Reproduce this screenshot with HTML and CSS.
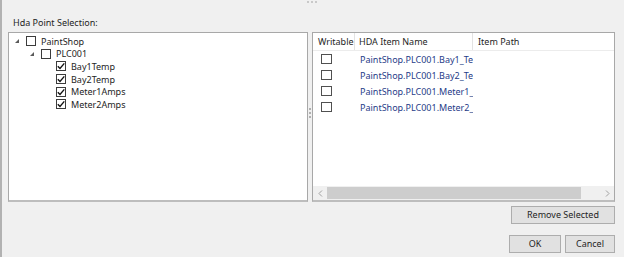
FILE: index.html
```html
<!DOCTYPE html>
<html>
<head>
<meta charset="utf-8">
<link rel="stylesheet" href="styles.css">
</head>
<body>
<div class="window">
  <div class="grip-top"><span></span><span></span><span></span></div>
  <div class="section-label">Hda Point Selection:</div>
  <div class="panes">
    <div class="tree-pane">
      <div class="tree-row lvl0">
        <svg class="expander" width="4" height="4" viewBox="0 0 4 4"><polygon points="4,0 4,4 0,4"/></svg>
        <span class="cb"></span><span class="tree-text">PaintShop</span>
      </div>
      <div class="tree-row lvl1">
        <svg class="expander" width="4" height="4" viewBox="0 0 4 4"><polygon points="4,0 4,4 0,4"/></svg>
        <span class="cb"></span><span class="tree-text">PLC001</span>
      </div>
      <div class="tree-row lvl2">
        <span class="cb checked"><svg viewBox="0 0 10 10" width="10" height="10"><path d="M1.8 5.2 L4 7.4 L8.3 2.4"/></svg></span><span class="tree-text">Bay1Temp</span>
      </div>
      <div class="tree-row lvl2">
        <span class="cb checked"><svg viewBox="0 0 10 10" width="10" height="10"><path d="M1.8 5.2 L4 7.4 L8.3 2.4"/></svg></span><span class="tree-text">Bay2Temp</span>
      </div>
      <div class="tree-row lvl2">
        <span class="cb checked"><svg viewBox="0 0 10 10" width="10" height="10"><path d="M1.8 5.2 L4 7.4 L8.3 2.4"/></svg></span><span class="tree-text">Meter1Amps</span>
      </div>
      <div class="tree-row lvl2">
        <span class="cb checked"><svg viewBox="0 0 10 10" width="10" height="10"><path d="M1.8 5.2 L4 7.4 L8.3 2.4"/></svg></span><span class="tree-text">Meter2Amps</span>
      </div>
    </div>
    <div class="splitter"><div class="splitter-grip"><span></span><span></span><span></span></div></div>
    <div class="list-pane">
      <div class="list-header">
        <div class="col col-w">Writable</div>
        <div class="col col-n">HDA Item Name</div>
        <div class="col col-p">Item Path</div>
      </div>
      <div class="list-body">
        <div class="list-row"><div class="col col-w"><span class="cb cb-lg"></span></div><div class="col col-n item">PaintShop.PLC001.Bay1_Temp</div><div class="col col-p"></div></div>
        <div class="list-row"><div class="col col-w"><span class="cb cb-lg"></span></div><div class="col col-n item">PaintShop.PLC001.Bay2_Temp</div><div class="col col-p"></div></div>
        <div class="list-row"><div class="col col-w"><span class="cb cb-lg"></span></div><div class="col col-n item">PaintShop.PLC001.Meter1_Amps</div><div class="col col-p"></div></div>
        <div class="list-row"><div class="col col-w"><span class="cb cb-lg"></span></div><div class="col col-n item">PaintShop.PLC001.Meter2_Amps</div><div class="col col-p"></div></div>
      </div>
      <div class="hscroll">
        <svg class="arrow" width="5" height="7" viewBox="0 0 5 7"><path d="M4 0.5 L1 3.5 L4 6.5"/></svg>
        <div class="track"><div class="thumb"></div></div>
        <svg class="arrow" width="5" height="7" viewBox="0 0 5 7"><path d="M1 0.5 L4 3.5 L1 6.5"/></svg>
      </div>
    </div>
  </div>
  <div class="actions">
    <button class="btn btn-remove">Remove Selected</button>
  </div>
  <div class="footer">
    <button class="btn btn-ok">OK</button>
    <button class="btn btn-cancel">Cancel</button>
  </div>
</div>
</body>
</html>
```
FILE: styles.css
```css
* { box-sizing: border-box; }
html, body { margin: 0; padding: 0; }
body {
  background: #f0f0f0;
  font-family: "Noto Sans", "Open Sans", sans-serif;
  font-size: 9px;
  color: #1e1e1e;
}
.window {
  width: 624px;
  height: 257px;
  border-left: 2px solid #b2b2b2;
  padding-left: 6px;
  padding-right: 9px;
  display: flex;
  flex-direction: column;
  overflow: hidden;
}
.grip-top {
  height: 16px;
  display: flex;
  gap: 2px;
  padding-left: 299px;
  padding-top: 1px;
}
.grip-top span {
  width: 2px;
  height: 2px;
  background: #bdbdbd;
  border-radius: 1px;
}
.section-label {
  height: 16px;
  line-height: 13px;
  padding-left: 5px;
}
.panes {
  display: flex;
  height: 170px;
}
.tree-pane {
  width: 300px;
  background: #fff;
  border: 1px solid #a8a8a8;
  border-bottom: 2px solid #bdbdbd;
  padding-top: 2px;
}
.tree-row {
  height: 12.6px;
  display: flex;
  align-items: center;
}
.tree-row.lvl0 { padding-left: 6px; }
.tree-row.lvl1 { padding-left: 21px; }
.tree-row.lvl2 { padding-left: 47px; }
.expander {
  fill: #5a5a5a;
  margin-right: 7px;
  flex: none;
}
.cb {
  width: 10px;
  height: 10px;
  border: 1px solid #3c3c3c;
  background: #fff;
  flex: none;
  display: inline-flex;
  align-items: center;
  justify-content: center;
  position: relative;
}
.cb svg {
  position: absolute;
  left: -1px;
  top: -1px;
}
.cb svg path {
  fill: none;
  stroke: #111;
  stroke-width: 1.4;
}
.tree-text {
  margin-left: 5px;
  white-space: nowrap;
}
.splitter {
  width: 4px;
  display: flex;
  align-items: center;
  justify-content: center;
}
.splitter-grip {
  display: flex;
  flex-direction: column;
  gap: 2px;
  margin-top: -8px;
}
.splitter-grip span {
  width: 2px;
  height: 2px;
  background: #b0b0b0;
}
.list-pane {
  flex: 1;
  background: #fff;
  border: 1px solid #a8a8a8;
  border-bottom: 2px solid #bdbdbd;
  display: flex;
  flex-direction: column;
}
.list-header {
  display: flex;
  height: 18px;
  border-bottom: 1px solid #ececec;
  align-items: stretch;
}
.list-header .col {
  line-height: 18px;
  border-right: 1px solid #e3e3e3;
}
.list-header .col-p { border-right: none; }
.col {
  white-space: nowrap;
  overflow: hidden;
  flex: none;
}
.col-w { width: 42px; padding-left: 5px; }
.col-n { width: 118px; padding-left: 4px; padding-right: 3px; }
.col-p { flex: 1; padding-left: 5px; }
.list-body { flex: 1; }
.list-row {
  display: flex;
  height: 16px;
  align-items: center;
}
.list-row .col-w { padding-left: 8px; display: flex; align-items: center; }
.list-row .col-n { padding-left: 5px; }
.cb-lg { width: 11px; height: 10px; border-color: #505050; }
.item { color: #1f3c88; }
.hscroll {
  height: 14px;
  background: #f0f0f0;
  display: flex;
  align-items: center;
  padding: 0 4px 0 5px;
}
.arrow path {
  fill: none;
  stroke: #a0a0a0;
  stroke-width: 1;
}
.track {
  flex: 1;
  height: 12px;
  margin: 0 24px 0 4px;
}
.thumb {
  height: 12px;
  background: #cdcdcd;
}
.actions {
  display: flex;
  justify-content: flex-end;
  margin-top: 4px;
}
.footer {
  display: flex;
  justify-content: flex-end;
  gap: 4px;
  margin-top: 11px;
}
.btn {
  font: inherit;
  color: #1e1e1e;
  background: #e1e1e1;
  border: 1px solid #adadad;
  height: 18px;
  padding: 0;
  margin: 0;
  line-height: 16px;
  text-align: center;
}
.btn-remove { width: 104px; }
.btn-ok { width: 52px; }
.btn-cancel { width: 50px; }
```
